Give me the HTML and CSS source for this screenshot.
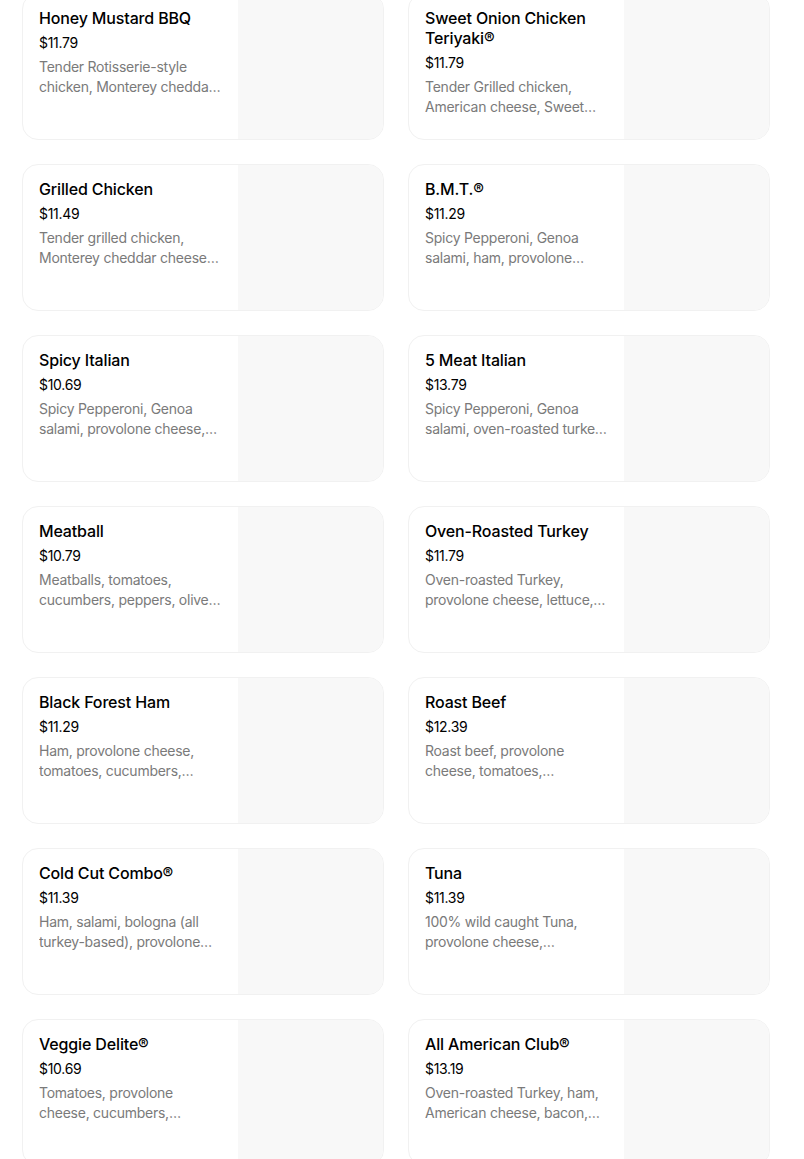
FILE: index.html
```html
<!DOCTYPE html>
<html lang="en">
<head>
<meta charset="utf-8">
<title>Menu</title>
<link rel="stylesheet" href="styles.css">
</head>
<body>
<div class="grid">
  <div class="card"><div class="info"><div class="name">Honey Mustard BBQ</div><div class="price">$11.79</div><div class="desc">Tender Rotisserie-style chicken, Monterey cheddar cheese, tomatoes, cucumbers, peppers and more</div></div><div class="pic"></div></div>
  <div class="card"><div class="info"><div class="name">Sweet Onion Chicken Teriyaki®</div><div class="price">$11.79</div><div class="desc">Tender Grilled chicken, American cheese, Sweet Onion Teriyaki sauce and more</div></div><div class="pic"></div></div>
  <div class="card"><div class="info"><div class="name">Grilled Chicken</div><div class="price">$11.49</div><div class="desc">Tender grilled chicken, Monterey cheddar cheese, lettuce, tomatoes and more</div></div><div class="pic"></div></div>
  <div class="card"><div class="info"><div class="name">B.M.T.®</div><div class="price">$11.29</div><div class="desc">Spicy Pepperoni, Genoa salami, ham, provolone cheese, lettuce and more</div></div><div class="pic"></div></div>
  <div class="card"><div class="info"><div class="name">Spicy Italian</div><div class="price">$10.69</div><div class="desc">Spicy Pepperoni, Genoa salami, provolone cheese, lettuce, tomatoes and more</div></div><div class="pic"></div></div>
  <div class="card"><div class="info"><div class="name">5 Meat Italian</div><div class="price">$13.79</div><div class="desc">Spicy Pepperoni, Genoa salami, oven-roasted turkey, ham, bacon and more</div></div><div class="pic"></div></div>
  <div class="card"><div class="info"><div class="name">Meatball</div><div class="price">$10.79</div><div class="desc">Meatballs, tomatoes, cucumbers, peppers, olives and more</div></div><div class="pic"></div></div>
  <div class="card"><div class="info"><div class="name">Oven-Roasted Turkey</div><div class="price">$11.79</div><div class="desc">Oven-roasted Turkey, provolone cheese, lettuce, tomatoes and more</div></div><div class="pic"></div></div>
  <div class="card"><div class="info"><div class="name">Black Forest Ham</div><div class="price">$11.29</div><div class="desc">Ham, provolone cheese, tomatoes, cucumbers, lettuce and more</div></div><div class="pic"></div></div>
  <div class="card"><div class="info"><div class="name">Roast Beef</div><div class="price">$12.39</div><div class="desc">Roast beef, provolone cheese, tomatoes, cucumbers and more</div></div><div class="pic"></div></div>
  <div class="card"><div class="info"><div class="name">Cold Cut Combo®</div><div class="price">$11.39</div><div class="desc">Ham, salami, bologna (all turkey-based), provolone cheese and more</div></div><div class="pic"></div></div>
  <div class="card"><div class="info"><div class="name">Tuna</div><div class="price">$11.39</div><div class="desc">100% wild caught Tuna, provolone cheese, cucumbers and more</div></div><div class="pic"></div></div>
  <div class="card"><div class="info"><div class="name">Veggie Delite®</div><div class="price">$10.69</div><div class="desc">Tomatoes, provolone cheese, cucumbers, peppers and more</div></div><div class="pic"></div></div>
  <div class="card"><div class="info"><div class="name">All American Club®</div><div class="price">$13.19</div><div class="desc">Oven-roasted Turkey, ham, American cheese, bacon, lettuce and more</div></div><div class="pic"></div></div>
</div>
</body>
</html>
```

FILE: styles.css
```css
html, body {
  margin: 0;
  padding: 0;
  background: #ffffff;
}
body {
  font-family: Inter, "Noto Sans", "Liberation Sans", sans-serif;
  color: #000000;
  overflow: hidden;
}
.grid {
  display: grid;
  grid-template-columns: 362px 362px;
  column-gap: 24px;
  row-gap: 24px;
  padding-left: 22px;
  margin-top: -7px;
}
.card {
  display: flex;
  height: 147px;
  box-sizing: border-box;
  border: 1px solid #f1f1f1;
  border-radius: 16px;
  overflow: hidden;
  background: #ffffff;
}
.info {
  flex: 1;
  min-width: 0;
  padding: 14px 16px 0 16px;
}
.pic {
  width: 145px;
  flex: none;
  background: #f8f8f8;
}
.name {
  font-size: 16px;
  font-weight: 500;
  line-height: 20px;
  margin-bottom: 5px;
  letter-spacing: -0.15px;
}
.price {
  font-size: 14px;
  line-height: 20px;
  margin-bottom: 4px;
  letter-spacing: -0.3px;
}
.desc {
  font-size: 14px;
  line-height: 20px;
  color: #7a7a7a;
  letter-spacing: -0.25px;
  display: -webkit-box;
  -webkit-line-clamp: 2;
  -webkit-box-orient: vertical;
  overflow: hidden;
}
```
